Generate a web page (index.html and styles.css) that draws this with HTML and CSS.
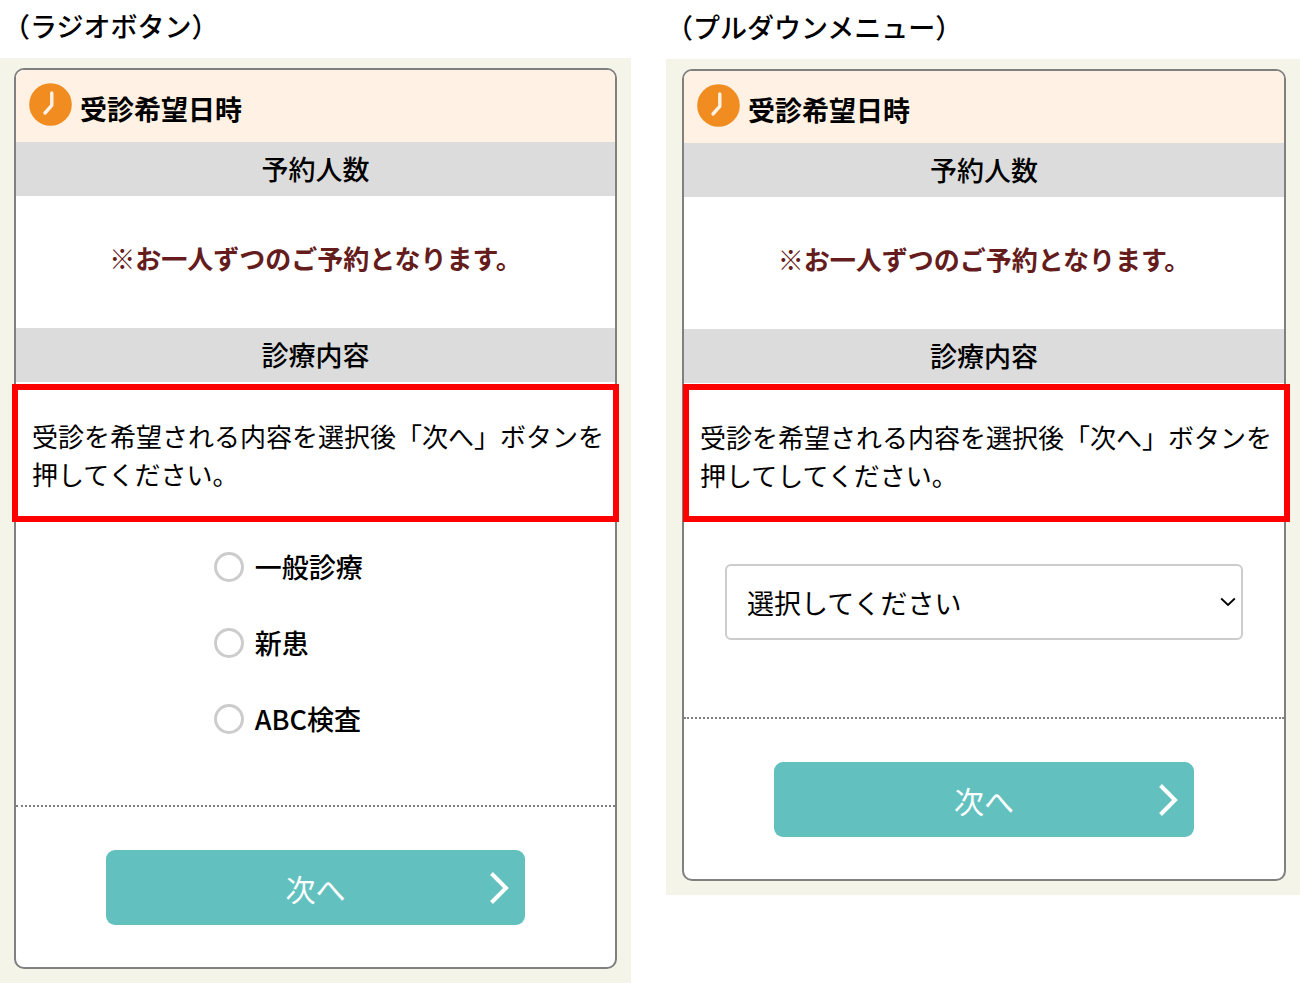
FILE: index.html
```html
<!DOCTYPE html>
<html lang="ja">

<head>
    <meta charset="UTF-8">
    <meta name="viewport" content="width=device-width, initial-scale=1.0">
    <title>受診希望日時</title>
    <link rel="stylesheet" href="styles.css">
</head>

<body>
    <main class="screens">
        <section class="screen screen-radio">
            <h1 class="screen-title">（ラジオボタン）</h1>
            <div class="panel">
                <form class="card">
                    <div class="card-head">
                        <svg class="clock" viewBox="0 0 43 43" aria-hidden="true">
                            <circle cx="21.5" cy="21.5" r="21.3" fill="#f08c20" />
                            <path d="M22.8 10v12.3l-6.8 7.7" fill="none" stroke="#fff2e4" stroke-width="3.4" stroke-linecap="round" stroke-linejoin="round" />
                        </svg>
                        <h2>受診希望日時</h2>
                    </div>
                    <h3 class="bar">予約人数</h3>
                    <p class="note">※お一人ずつのご予約となります。</p>
                    <h3 class="bar">診療内容</h3>
                    <p class="guide">受診を希望される内容を選択後「次へ」ボタンを<br>押してください。</p>
                    <div class="options">
                        <label class="option"><input type="radio" name="menu" value="general">一般診療</label>
                        <label class="option"><input type="radio" name="menu" value="new">新患</label>
                        <label class="option"><input type="radio" name="menu" value="abc">ABC検査</label>
                    </div>
                    <div class="card-foot">
                        <button type="button" class="next">次へ
                            <svg class="arrow" viewBox="0 0 20 32" aria-hidden="true">
                                <path d="M2.5 1.5L17 16L2.5 30.5" fill="none" stroke="#fff" stroke-width="4" />
                            </svg>
                        </button>
                    </div>
                </form>
            </div>
        </section>

        <section class="screen screen-pulldown">
            <h1 class="screen-title">（プルダウンメニュー）</h1>
            <div class="panel">
                <form class="card">
                    <div class="card-head">
                        <svg class="clock" viewBox="0 0 43 43" aria-hidden="true">
                            <circle cx="21.5" cy="21.5" r="21.3" fill="#f08c20" />
                            <path d="M22.8 10v12.3l-6.8 7.7" fill="none" stroke="#fff2e4" stroke-width="3.4" stroke-linecap="round" stroke-linejoin="round" />
                        </svg>
                        <h2>受診希望日時</h2>
                    </div>
                    <h3 class="bar">予約人数</h3>
                    <p class="note">※お一人ずつのご予約となります。</p>
                    <h3 class="bar">診療内容</h3>
                    <p class="guide">受診を希望される内容を選択後「次へ」ボタンを<br>押してしてください。</p>
                    <div class="pulldown">
                        <select name="menu" aria-label="診療内容">
                            <option>選択してください</option>
                        </select>
                        <svg class="caret" viewBox="0 0 16 10" aria-hidden="true">
                            <path d="M1.2 1.5L8 8L14.8 1.5" fill="none" stroke="#000" stroke-width="1.8" />
                        </svg>
                    </div>
                    <div class="card-foot">
                        <button type="button" class="next">次へ
                            <svg class="arrow" viewBox="0 0 20 32" aria-hidden="true">
                                <path d="M2.5 1.5L17 16L2.5 30.5" fill="none" stroke="#fff" stroke-width="4" />
                            </svg>
                        </button>
                    </div>
                </form>
            </div>
        </section>
    </main>
</body>

</html>
```

FILE: styles.css
```css
* {
    box-sizing: border-box;
}

body {
    margin: 0;
    background-color: #fff;
    color: #000;
    font-family: "Noto Sans CJK JP", sans-serif;
    font-size: 27px;
}

h1,
h2,
h3,
p {
    margin: 0;
}

.screens {
    display: grid;
    grid-template-columns: 631fr 634fr;
    column-gap: 35px;
    align-items: start;
}

.screen-pulldown {
    padding-top: 1px;
}

.screen-title {
    height: 58px;
    font-size: 27px;
    font-weight: 500;
    line-height: 52px;
}

.screen-radio .screen-title {
    padding-left: 3px;
}

.panel {
    background-color: #f4f4e8;
    padding: 10px 14px 14px;
}

.screen-pulldown .panel {
    padding-left: 16px;
}

.card {
    background-color: #fff;
    border: 2px solid #808080;
    border-radius: 10px;
}

.card-head {
    display: flex;
    align-items: flex-end;
    gap: 8px;
    padding: 13px 13px 16px;
    background-color: #fff2e4;
    border-radius: 8px 8px 0 0;
}

.card-head h2 {
    font-size: 27px;
    font-weight: bold;
    line-height: 34px;
}

.clock {
    width: 43px;
    height: 43px;
}

.bar {
    background-color: #dcdcdc;
    font-size: 27px;
    font-weight: 500;
    line-height: 54px;
    text-align: center;
}

.note {
    padding: 43px 0 51px;
    color: #641c1c;
    font-size: 26px;
    font-weight: bold;
    line-height: 38px;
    text-align: center;
}

.guide {
    position: relative;
    padding: 35px 0 29px 16px;
    font-size: 26px;
    line-height: 38px;
    white-space: nowrap;
}

/* 赤枠 */
.guide::after {
    content: "";
    position: absolute;
    top: 2px;
    right: -4px;
    bottom: 0;
    left: -4px;
    border: 6px solid #f00;
}

.screen-pulldown .guide::after {
    top: 1px;
    right: -6px;
    bottom: 1px;
    left: -1px;
}

.options {
    display: flex;
    flex-direction: column;
    align-items: flex-start;
    gap: 46px;
    padding: 30px 0 71px 33%;
}

.option {
    display: flex;
    align-items: center;
    gap: 11px;
    font-weight: 500;
    line-height: 30px;
}

.option input {
    appearance: none;
    width: 30px;
    height: 30px;
    margin: 0;
    border: 3px solid #ccc;
    border-radius: 50%;
    background-color: #fff;
}

.option input:checked {
    background-color: #62c1bf;
}

.pulldown {
    position: relative;
    padding: 41px 41px 77px;
}

.pulldown select {
    appearance: none;
    display: block;
    width: 100%;
    height: 76px;
    padding: 0 20px;
    border: 2px solid #ccc;
    border-radius: 6px;
    background-color: #fff;
    color: #000;
    font-family: inherit;
    font-size: 27px;
}

.caret {
    position: absolute;
    top: 74px;
    right: 48px;
    width: 16px;
    height: 10px;
    pointer-events: none;
}

.card-foot {
    padding: 43px 0 42px;
    border-top: 2px dotted #808080;
}

.next {
    position: relative;
    display: block;
    width: 70%;
    height: 75px;
    margin: 0 auto;
    padding: 0;
    border: none;
    border-radius: 9px;
    background-color: #62c1bf;
    color: #fff;
    font-family: inherit;
    font-size: 30px;
    cursor: pointer;
}

.arrow {
    position: absolute;
    top: 22px;
    right: 16px;
    width: 20px;
    height: 32px;
}
```
